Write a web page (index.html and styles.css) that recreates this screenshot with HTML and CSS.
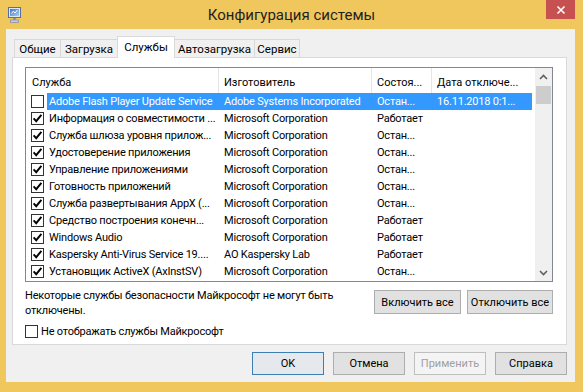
FILE: index.html
```html
<!DOCTYPE html>
<html lang="ru">
<head>
<meta charset="utf-8">
<title>Конфигурация системы</title>
<link rel="stylesheet" href="styles.css">
</head>
<body>
<div class="window">
  <div class="titlebar">
    <svg class="app-icon" width="13" height="16" viewBox="0 0 13 16">
      <defs>
        <linearGradient id="scr" x1="0" y1="0" x2="1" y2="1">
          <stop offset="0" stop-color="#3f74c8"/>
          <stop offset="1" stop-color="#a9cdf2"/>
        </linearGradient>
      </defs>
      <rect x="0.5" y="0.5" width="12" height="10" fill="#dfe7f1" stroke="#56709a"/>
      <rect x="2" y="2" width="9" height="7" fill="url(#scr)"/>
      <path d="M3.5 6.5 L5.2 4.2 L7 6 L9.5 3" fill="none" stroke="#ffffff" stroke-width="1"/>
      <rect x="5" y="11" width="3" height="2" fill="#8e969e"/>
      <rect x="2.5" y="13" width="8" height="2.5" fill="#c9ced3" stroke="#8a9199" stroke-width="0.8"/>
    </svg>
    <div class="title">Конфигурация системы</div>
    <div class="close">
      <svg width="10" height="10" viewBox="0 0 10 10"><path d="M1.5 1.5 L8.5 8.5 M8.5 1.5 L1.5 8.5" stroke="#ffffff" stroke-width="1.6"/></svg>
    </div>
  </div>

  <div class="client">
    <div class="tabs">
      <div class="tab tab-general">Общие</div>
      <div class="tab tab-boot">Загрузка</div>
      <div class="tab tab-services active">Службы</div>
      <div class="tab tab-startup">Автозагрузка</div>
      <div class="tab tab-tools">Сервис</div>
    </div>

    <div class="panel">
      <div class="listbox">
        <div class="list">
          <div class="header">
            <div class="hcell h1">Служба</div>
            <div class="hcell h2">Изготовитель</div>
            <div class="hcell h3">Состоя...</div>
            <div class="hcell h4">Дата отключе...</div>
          </div>

          <div class="row sel">
            <div class="cbcell"><span class="cb"></span></div>
            <div class="cells"><span class="c c1">Adobe Flash Player Update Service</span><span class="c">Adobe Systems Incorporated</span><span class="c">Остан...</span><span class="c">16.11.2018 0:1...</span></div>
          </div>
          <div class="row">
            <div class="cbcell"><span class="cb on"><svg width="11" height="11" viewBox="0 0 11 11"><path d="M1.6 5.4 L4.2 8.2 L9.4 1.8" fill="none" stroke="#000" stroke-width="1.9"/></svg></span></div>
            <div class="cells"><span class="c c1">Информация о совместимости ...</span><span class="c">Microsoft Corporation</span><span class="c">Работает</span><span class="c"></span></div>
          </div>
          <div class="row">
            <div class="cbcell"><span class="cb on"><svg width="11" height="11" viewBox="0 0 11 11"><path d="M1.6 5.4 L4.2 8.2 L9.4 1.8" fill="none" stroke="#000" stroke-width="1.9"/></svg></span></div>
            <div class="cells"><span class="c c1">Служба шлюза уровня прилож...</span><span class="c">Microsoft Corporation</span><span class="c">Остан...</span><span class="c"></span></div>
          </div>
          <div class="row">
            <div class="cbcell"><span class="cb on"><svg width="11" height="11" viewBox="0 0 11 11"><path d="M1.6 5.4 L4.2 8.2 L9.4 1.8" fill="none" stroke="#000" stroke-width="1.9"/></svg></span></div>
            <div class="cells"><span class="c c1">Удостоверение приложения</span><span class="c">Microsoft Corporation</span><span class="c">Остан...</span><span class="c"></span></div>
          </div>
          <div class="row">
            <div class="cbcell"><span class="cb on"><svg width="11" height="11" viewBox="0 0 11 11"><path d="M1.6 5.4 L4.2 8.2 L9.4 1.8" fill="none" stroke="#000" stroke-width="1.9"/></svg></span></div>
            <div class="cells"><span class="c c1">Управление приложениями</span><span class="c">Microsoft Corporation</span><span class="c">Остан...</span><span class="c"></span></div>
          </div>
          <div class="row">
            <div class="cbcell"><span class="cb on"><svg width="11" height="11" viewBox="0 0 11 11"><path d="M1.6 5.4 L4.2 8.2 L9.4 1.8" fill="none" stroke="#000" stroke-width="1.9"/></svg></span></div>
            <div class="cells"><span class="c c1">Готовность приложений</span><span class="c">Microsoft Corporation</span><span class="c">Остан...</span><span class="c"></span></div>
          </div>
          <div class="row">
            <div class="cbcell"><span class="cb on"><svg width="11" height="11" viewBox="0 0 11 11"><path d="M1.6 5.4 L4.2 8.2 L9.4 1.8" fill="none" stroke="#000" stroke-width="1.9"/></svg></span></div>
            <div class="cells"><span class="c c1">Служба развертывания AppX (...</span><span class="c">Microsoft Corporation</span><span class="c">Остан...</span><span class="c"></span></div>
          </div>
          <div class="row">
            <div class="cbcell"><span class="cb on"><svg width="11" height="11" viewBox="0 0 11 11"><path d="M1.6 5.4 L4.2 8.2 L9.4 1.8" fill="none" stroke="#000" stroke-width="1.9"/></svg></span></div>
            <div class="cells"><span class="c c1">Средство построения конечн...</span><span class="c">Microsoft Corporation</span><span class="c">Работает</span><span class="c"></span></div>
          </div>
          <div class="row">
            <div class="cbcell"><span class="cb on"><svg width="11" height="11" viewBox="0 0 11 11"><path d="M1.6 5.4 L4.2 8.2 L9.4 1.8" fill="none" stroke="#000" stroke-width="1.9"/></svg></span></div>
            <div class="cells"><span class="c c1">Windows Audio</span><span class="c">Microsoft Corporation</span><span class="c">Работает</span><span class="c"></span></div>
          </div>
          <div class="row">
            <div class="cbcell"><span class="cb on"><svg width="11" height="11" viewBox="0 0 11 11"><path d="M1.6 5.4 L4.2 8.2 L9.4 1.8" fill="none" stroke="#000" stroke-width="1.9"/></svg></span></div>
            <div class="cells"><span class="c c1">Kaspersky Anti-Virus Service 19....</span><span class="c">AO Kaspersky Lab</span><span class="c">Работает</span><span class="c"></span></div>
          </div>
          <div class="row">
            <div class="cbcell"><span class="cb on"><svg width="11" height="11" viewBox="0 0 11 11"><path d="M1.6 5.4 L4.2 8.2 L9.4 1.8" fill="none" stroke="#000" stroke-width="1.9"/></svg></span></div>
            <div class="cells"><span class="c c1">Установщик ActiveX (AxInstSV)</span><span class="c">Microsoft Corporation</span><span class="c">Остан...</span><span class="c"></span></div>
          </div>
        </div>

        <div class="vscroll">
          <div class="arrow"><svg width="9" height="6" viewBox="0 0 9 6"><path d="M1 5 L4.5 1.5 L8 5" fill="none" stroke="#606060" stroke-width="1.6"/></svg></div>
          <div class="track"><div class="thumb"></div></div>
          <div class="arrow"><svg width="9" height="6" viewBox="0 0 9 6"><path d="M1 1 L4.5 4.5 L8 1" fill="none" stroke="#606060" stroke-width="1.6"/></svg></div>
        </div>
      </div>

      <div class="actions">
        <div class="note">Некоторые службы безопасности Майкрософт не могут быть<br>отключены.</div>
        <div class="btn btn-enable">Включить все</div>
        <div class="btn btn-disable">Отключить все</div>
      </div>

      <div class="hide-ms"><span class="cb"></span><span>Не отображать службы Майкрософт</span></div>
    </div>

    <div class="footer">
      <div class="btn fbtn default">OK</div>
      <div class="btn fbtn">Отмена</div>
      <div class="btn fbtn disabled">Применить</div>
      <div class="btn fbtn">Справка</div>
    </div>
  </div>
</div>
</body>
</html>
```

FILE: styles.css
```css
* { box-sizing: border-box; }
html, body { margin: 0; padding: 0; }
body {
  width: 583px;
  height: 392px;
  overflow: hidden;
  background: #f0c75c;
  font-family: "Segoe UI", Roboto, "Liberation Sans", sans-serif;
  font-size: 11px;
  color: #000;
}
.window {
  width: 583px;
  height: 392px;
  display: flex;
  flex-direction: column;
}
.titlebar {
  height: 29px;
  flex: none;
  display: grid;
  grid-template-columns: 1fr auto 1fr;
  align-items: start;
}
.app-icon { margin: 7px 0 0 8px; display: block; }
.title {
  font-size: 15px;
  line-height: 30px;
  color: #1f1f1f;
}
.close {
  justify-self: end;
  width: 29px;
  height: 19px;
  margin-right: 8px;
  background: #c75050;
  display: flex;
  align-items: center;
  justify-content: center;
}
.close svg { display: block; }

.client {
  margin: 0 8px 0 6px;
  height: 353px;
  flex: none;
  background: #f0f0f0;
  display: flex;
  flex-direction: column;
}

/* tabs */
.tabs {
  height: 28px;
  flex: none;
  display: flex;
  align-items: flex-end;
  padding-left: 8px;
}
.tab {
  height: 18px;
  border: 1px solid #d9d9d9;
  border-bottom: none;
  margin-left: -1px;
  background: #f0f0f0;
  text-align: center;
  padding-top: 1px;
  line-height: 16px;
  font-size: 11.5px;
  white-space: nowrap;
}
.tab-general { width: 47px; margin-left: 0; }
.tab-boot { width: 58px; }
.tab-services { width: 58px; }
.tab-startup { width: 81px; }
.tab-tools { width: 46px; }
.tab.active {
  height: 22px;
  margin-bottom: -1px;
  background: #ffffff;
  position: relative;
  z-index: 1;
  padding-top: 2px;
}

/* panel */
.panel {
  margin-left: 6px;
  width: 555px;
  height: 288px;
  flex: none;
  border: 1px solid #d9d9d9;
  background: #ffffff;
  padding: 9px 0 0 12px;
  display: flex;
  flex-direction: column;
}
.listbox {
  width: 528px;
  height: 215px;
  flex: none;
  border: 1px solid #828790;
  display: flex;
  background: #fff;
}
.list {
  flex: 1;
  display: flex;
  flex-direction: column;
  overflow: hidden;
  letter-spacing: -0.2px;
}
.header {
  height: 25px;
  flex: none;
  display: flex;
}
.hcell {
  border-right: 1px solid #e5e5e5;
  padding: 5px 0 0 5px;
  line-height: 19px;
  white-space: nowrap;
  overflow: hidden;
  letter-spacing: 0;
}
.h1 { width: 193px; padding-left: 6px; }
.h2 { width: 153px; }
.h3 { width: 60px; }
.h4 { flex: 1; border-right: none; }

.row {
  height: 17px;
  flex: none;
  display: flex;
  line-height: 17px;
}
.cbcell {
  width: 21px;
  flex: none;
  padding: 2px 0 0 5px;
}
.cells {
  flex: 1;
  display: grid;
  grid-template-columns: 172px 153px 60px 1fr;
  margin-right: 3px;
}
.c {
  padding-left: 5px;
  white-space: nowrap;
  overflow: hidden;
}
.c.c1 { padding-left: 2px; }
.row.sel .cells { background: #3399ff; color: #ffffff; }

.cb {
  display: block;
  width: 13px;
  height: 13px;
  border: 1px solid #333333;
  background: #ffffff;
}
.cb svg { display: block; }

/* scrollbar */
.vscroll {
  width: 17px;
  flex: none;
  background: #f0f0f0;
  display: flex;
  flex-direction: column;
}
.arrow {
  height: 17px;
  flex: none;
  display: flex;
  align-items: center;
  justify-content: center;
}
.track { flex: 1; padding: 1px 1px 0; }
.thumb { height: 18px; background: #cdcdcd; }

/* actions */
.actions {
  width: 528px;
  margin-top: 6px;
  display: flex;
  flex: none;
}
.note {
  flex: 1;
  line-height: 15px;
  white-space: nowrap;
  letter-spacing: -0.2px;
}
.btn {
  height: 24px;
  border: 1px solid #adadad;
  background: #e1e1e1;
  display: flex;
  align-items: center;
  justify-content: center;
  white-space: nowrap;
}
.btn-enable { width: 87px; margin-top: 2px; }
.btn-disable { width: 86px; margin-top: 2px; margin-left: 6px; }

.hide-ms {
  margin-top: 6px;
  display: flex;
  align-items: center;
  gap: 3px;
  line-height: 15px;
  letter-spacing: -0.2px;
}

/* footer */
.footer {
  display: flex;
  justify-content: flex-end;
  gap: 9px;
  padding-right: 8px;
  margin-top: 7px;
}
.fbtn { width: 72px; height: 23px; }
.fbtn.default { border-color: #3c7fb1; background: #e5e9ee; }
.fbtn.disabled { border-color: #bfbfbf; background: #f4f4f4; color: #a0a0a0; }
```
